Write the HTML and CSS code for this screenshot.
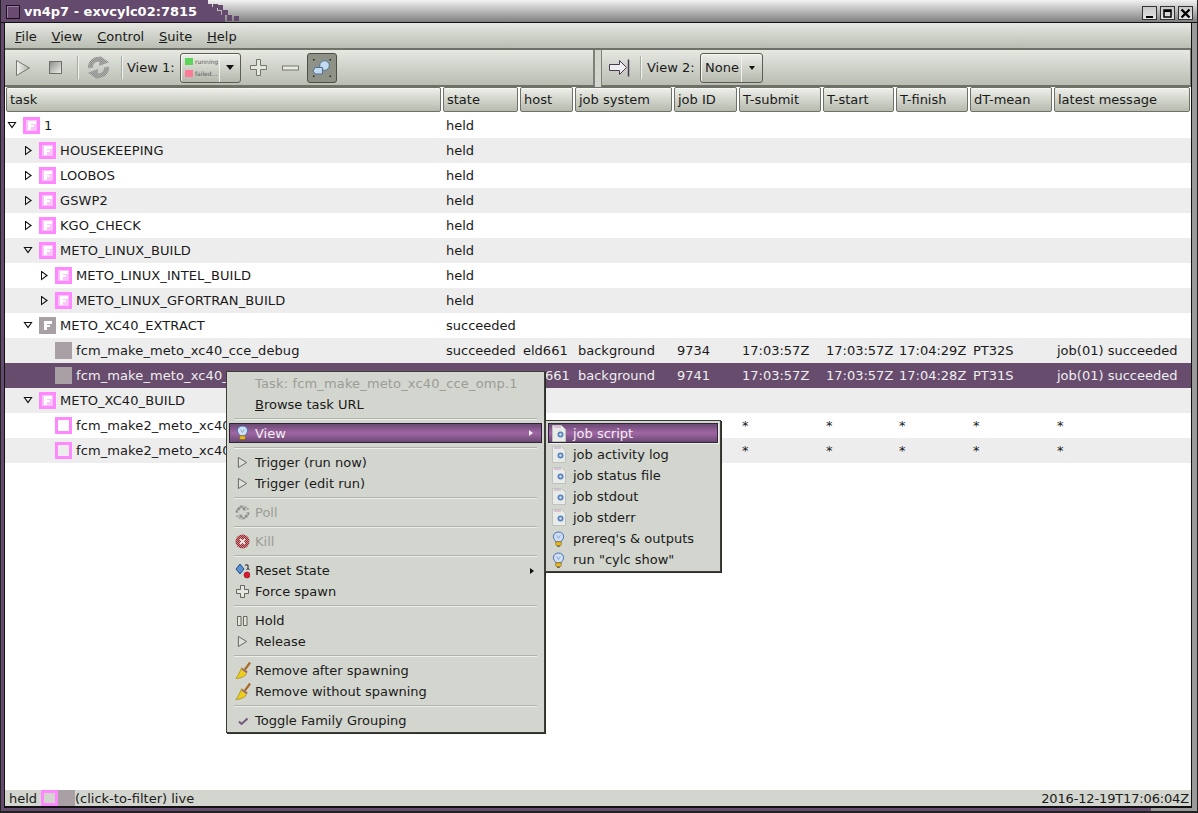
FILE: index.html
```html
<!DOCTYPE html>
<html lang="en">
<head>
<meta charset="utf-8">
<title>vn4p7 - exvcylc02:7815</title>
<link rel="stylesheet" href="styles.css">
</head>
<body>
<svg class="defs" width="0" height="0" aria-hidden="true">
  <defs>
    <pattern id="dots" width="2" height="2" patternUnits="userSpaceOnUse"><rect width="2" height="2" fill="#e6e8e2"/><rect width="1" height="1" fill="#555"/><rect x="1" y="1" width="1" height="1" fill="#555"/></pattern>
    <pattern id="reddots" width="2" height="2" patternUnits="userSpaceOnUse"><rect width="2" height="2" fill="#d08080"/><rect width="1" height="1" fill="#8a0a18"/><rect x="1" y="1" width="1" height="1" fill="#8a0a18"/></pattern>
    <linearGradient id="playg" x1="0" x2="1" y1="0" y2="0"><stop offset="0" stop-color="#f4f5f1"/><stop offset="1" stop-color="#aeb1a8"/></linearGradient>
    <linearGradient id="stopg" x1="0" x2="1" y1="0" y2="1"><stop offset="0" stop-color="#8c8e88"/><stop offset="1" stop-color="#f0f1ee"/></linearGradient>
    <symbol id="fam" viewBox="0 0 17 17"><rect x="5" y="4" width="8" height="3" fill="#fff"/><rect x="5" y="4" width="3" height="9" fill="#fff"/><rect x="5" y="8" width="6" height="2" fill="#fff"/></symbol>
    <symbol id="bulb" viewBox="0 0 14 17"><path d="M7 1C3.500 1 1.500 3.300 1.500 6c0 2.300 2 3.500 2.500 5.500h6C10.500 9.500 12.500 8.300 12.500 6 12.500 3.300 10.500 1 7 1z" fill="#cfe0f5" stroke="#3f66b0"/><path d="M5 4.500 7 8l2-3.500" fill="none" stroke="#8aa6d6"/><rect x="4" y="11.500" width="6" height="4" rx="1" fill="#e8b923" stroke="#8a6a10" stroke-width=".7"/><path d="M5.500 16.500h3" stroke="#555"/></symbol>
    <symbol id="tri" viewBox="0 0 12 14"><path d="M1.500 1.500v11l9-5.500z" fill="#dfe1db" stroke="#5c5e58"/></symbol>
    <symbol id="refresh" viewBox="0 0 24 24"><path d="M3.500 12.500A8.500 8.500 0 0 1 15 4" fill="none" stroke="url(#dots)" stroke-width="5"/><path d="M13.500 0 23 6.500 12.500 10.500z" fill="url(#dots)"/><path d="M20.500 11.500A8.500 8.500 0 0 1 9 20" fill="none" stroke="url(#dots)" stroke-width="5"/><path d="M10.500 24 1 17.500 11.500 13.500z" fill="url(#dots)"/></symbol>
    <symbol id="doc" viewBox="0 0 14 17"><path d="M.5.500h9l4 4v12H.500z" fill="#e9ebe8" stroke="#bfc1bd"/><path d="M2 2h7" stroke="#c69ac6"/><circle cx="8.500" cy="9.500" r="3" fill="#5b83bd"/><circle cx="8.500" cy="9.500" r="1.200" fill="#d8e4f2"/></symbol>
    <symbol id="broom" viewBox="0 0 17 18"><path d="M16 .500 10.500 8" stroke="#a86a20" stroke-width="2.400"/><path d="M7 6 13 10 11 14c-2 2-6 3.500-10 3.500C3 15 5 11 7 6z" fill="#eccd1e" stroke="#9a8210" stroke-width=".7"/><path d="M7.300 7.500 12.500 11" stroke="#8a4fa0" stroke-width="1.300"/></symbol>
  </defs>
</svg>

<div class="window">
  <header class="titlebar">
    <div class="title-tab">
      <span class="title-icon"></span>
      <span class="title-text">vn4p7 - exvcylc02:7815</span>
    </div>
    <svg class="title-dither" width="40" height="22" viewBox="0 0 40 22" aria-hidden="true">
      <path d="M0 0h3v4h4v3h5v4h4v4h4v7H0z" fill="#644a6c"/>
      <path d="M8 4h5v4H8zM13 5h5v5h-5zM17 10h6v5h-6zM22 15h5v6h-5zM29 16h5v5h-5z" fill="#644a6c"/>
    </svg>
    <div class="win-buttons">
      <span class="win-btn"><svg width="11" height="11" viewBox="0 0 11 11"><rect x="2" y="8" width="7" height="2" fill="#000"/></svg></span>
      <span class="win-btn"><svg width="11" height="11" viewBox="0 0 11 11"><path d="M2 2h7v7H2z" fill="none" stroke="#000" stroke-width="1.500"/><path d="M2 3h7" stroke="#000" stroke-width="2"/></svg></span>
      <span class="win-btn"><svg width="11" height="11" viewBox="0 0 11 11"><path d="M1.500 1.500l8 8M9.500 1.500l-8 8" stroke="#000" stroke-width="2.400"/></svg></span>
    </div>
  </header>

  <div class="client">
    <nav class="menubar">
      <span><u>F</u>ile</span>
      <span><u>V</u>iew</span>
      <span><u>C</u>ontrol</span>
      <span><u>S</u>uite</span>
      <span><u>H</u>elp</span>
    </nav>

    <div class="toolbars">
      <div class="toolbar toolbar-left">
        <span class="tool tool-play"><svg width="16" height="18" viewBox="0 0 16 18"><path d="M1.500 1.500v15l13-7.500z" fill="url(#playg)" stroke="#77796f"/></svg></span>
        <span class="tool tool-stop"><svg width="13" height="13" viewBox="0 0 13 13"><rect x=".5" y=".5" width="12" height="12" fill="url(#stopg)" stroke="#6e7068"/></svg></span>
        <span class="tool-sep sep-a"></span>
        <span class="tool tool-refresh"><svg width="23" height="23"><use href="#refresh"/></svg></span>
        <span class="tool-sep sep-b"></span>
        <span class="tool-label">View 1:</span>
        <span class="combo combo-1">
          <span class="combo-legend">
            <span class="legend-row"><i class="swatch swatch-run"></i>running</span>
            <span class="legend-row"><i class="swatch swatch-fail"></i>failed...</span>
          </span>
          <span class="combo-arrow"></span>
        </span>
        <span class="tool tool-plus"><svg width="17" height="17" viewBox="0 0 17 17"><path d="M6.500.500h4v6h6v4h-6v6h-4v-6h-6v-4h6z" fill="#e4e6e0" stroke="#74766d"/></svg></span>
        <span class="tool tool-minus"><svg width="17" height="6" viewBox="0 0 17 6"><rect x=".5" y="1" width="16" height="4" fill="#e8eae4" stroke="#74766d"/></svg></span>
        <span class="tool-active"><svg width="24" height="24" viewBox="0 0 24 24"><circle cx="14.500" cy="9.500" r="4.800" fill="#c4daf0" stroke="#50708f"/><path d="M5 11.500h7.500v6.500H5l-2-3z" fill="#c4daf0" stroke="#50708f"/><g fill="#222"><rect x="3" y="3" width="1.500" height="1.500"/><rect x="19.500" y="3" width="1.500" height="1.500"/><rect x="3" y="19.500" width="1.500" height="1.500"/><rect x="19.500" y="19.500" width="1.500" height="1.500"/></g></svg></span>
      </div>
      <div class="toolbar toolbar-right">
        <span class="tool tool-arrow"><svg width="22" height="18" viewBox="0 0 22 18"><path d="M1.500 5.500h10v-4l7 7-7 7v-4h-10z" fill="#f0eef0" stroke="#4a3a50"/><path d="M20.500.500v17" stroke="#4a3a50" stroke-width="1.500"/></svg></span>
        <span class="tool-sep sep-c"></span>
        <span class="tool-label">View 2:</span>
        <span class="combo combo-2">
          <span class="combo-value">None</span>
          <span class="combo-arrow combo-arrow-small"></span>
        </span>
      </div>
    </div>

    <div class="cols head">
      <div class="hcell hcell-first">task</div>
      <div class="hcell">state</div>
      <div class="hcell">host</div>
      <div class="hcell">job system</div>
      <div class="hcell">job ID</div>
      <div class="hcell">T-submit</div>
      <div class="hcell">T-start</div>
      <div class="hcell">T-finish</div>
      <div class="hcell">dT-mean</div>
      <div class="hcell">latest message</div>
    </div>

    <main class="tree">
      <div class="cols row">
        <div class="task d0"><span class="exp open"></span><span class="ic ic-held"><svg width="17" height="17"><use href="#fam"/></svg></span><span>1</span></div><div class="cell">held</div>
      </div>
      <div class="cols row alt">
        <div class="task d1"><span class="exp closed"></span><span class="ic ic-held"><svg width="17" height="17"><use href="#fam"/></svg></span><span>HOUSEKEEPING</span></div><div class="cell">held</div>
      </div>
      <div class="cols row">
        <div class="task d1"><span class="exp closed"></span><span class="ic ic-held"><svg width="17" height="17"><use href="#fam"/></svg></span><span>LOOBOS</span></div><div class="cell">held</div>
      </div>
      <div class="cols row alt">
        <div class="task d1"><span class="exp closed"></span><span class="ic ic-held"><svg width="17" height="17"><use href="#fam"/></svg></span><span>GSWP2</span></div><div class="cell">held</div>
      </div>
      <div class="cols row">
        <div class="task d1"><span class="exp closed"></span><span class="ic ic-held"><svg width="17" height="17"><use href="#fam"/></svg></span><span>KGO_CHECK</span></div><div class="cell">held</div>
      </div>
      <div class="cols row alt">
        <div class="task d1"><span class="exp open"></span><span class="ic ic-held"><svg width="17" height="17"><use href="#fam"/></svg></span><span>METO_LINUX_BUILD</span></div><div class="cell">held</div>
      </div>
      <div class="cols row">
        <div class="task d2"><span class="exp closed"></span><span class="ic ic-held"><svg width="17" height="17"><use href="#fam"/></svg></span><span>METO_LINUX_INTEL_BUILD</span></div><div class="cell">held</div>
      </div>
      <div class="cols row alt">
        <div class="task d2"><span class="exp closed"></span><span class="ic ic-held"><svg width="17" height="17"><use href="#fam"/></svg></span><span>METO_LINUX_GFORTRAN_BUILD</span></div><div class="cell">held</div>
      </div>
      <div class="cols row">
        <div class="task d1"><span class="exp open"></span><span class="ic ic-done"><svg width="17" height="17"><use href="#fam"/></svg></span><span>METO_XC40_EXTRACT</span></div><div class="cell">succeeded</div>
      </div>
      <div class="cols row alt">
        <div class="task d2"><span class="exp"></span><span class="ic ic-done"></span><span>fcm_make_meto_xc40_cce_debug</span></div>
        <div class="cell">succeeded</div><div class="cell">eld661</div><div class="cell">background</div><div class="cell">9734</div><div class="cell">17:03:57Z</div><div class="cell">17:03:57Z</div><div class="cell">17:04:29Z</div><div class="cell">PT32S</div><div class="cell">job(01) succeeded</div>
      </div>
      <div class="cols row selected">
        <div class="task d2"><span class="exp"></span><span class="ic ic-done"></span><span>fcm_make_meto_xc40_</span></div>
        <div class="cell"></div><div class="cell host-clip"><span>661</span></div><div class="cell">background</div><div class="cell">9741</div><div class="cell">17:03:57Z</div><div class="cell">17:03:57Z</div><div class="cell">17:04:28Z</div><div class="cell">PT31S</div><div class="cell">job(01) succeeded</div>
      </div>
      <div class="cols row alt">
        <div class="task d1"><span class="exp open"></span><span class="ic ic-held"><svg width="17" height="17"><use href="#fam"/></svg></span><span>METO_XC40_BUILD</span></div><div class="cell">held</div>
      </div>
      <div class="cols row">
        <div class="task d2"><span class="exp"></span><span class="ic ic-plain"></span><span>fcm_make2_meto_xc40</span></div>
        <div class="cell"></div><div class="cell"></div><div class="cell"></div><div class="cell"></div><div class="cell">*</div><div class="cell">*</div><div class="cell">*</div><div class="cell">*</div><div class="cell">*</div>
      </div>
      <div class="cols row alt">
        <div class="task d2"><span class="exp"></span><span class="ic ic-plain"></span><span>fcm_make2_meto_xc40</span></div>
        <div class="cell"></div><div class="cell"></div><div class="cell"></div><div class="cell"></div><div class="cell">*</div><div class="cell">*</div><div class="cell">*</div><div class="cell">*</div><div class="cell">*</div>
      </div>
    </main>

    <footer class="status">
      <span class="status-held">held</span>
      <span class="status-ic status-ic-held"></span>
      <span class="status-ic status-ic-done"></span>
      <span class="status-text">(click-to-filter) live</span>
      <span class="status-time">2016-12-19T17:06:04Z</span>
    </footer>
  </div>
</div>

<div class="menu context-menu">
  <div class="mi disabled mi-title"><span class="mi-ic"></span>Task: fcm_make_meto_xc40_cce_omp.1</div>
  <div class="mi"><span class="mi-ic"></span><span><u>B</u>rowse task URL</span></div>
  <div class="ms"></div>
  <div class="mi hi"><span class="mi-ic"><svg width="13" height="16"><use href="#bulb"/></svg></span>View<span class="sub-arrow"></span></div>
  <div class="ms"></div>
  <div class="mi"><span class="mi-ic"><svg width="11" height="13"><use href="#tri"/></svg></span>Trigger (run now)</div>
  <div class="mi"><span class="mi-ic"><svg width="11" height="13"><use href="#tri"/></svg></span>Trigger (edit run)</div>
  <div class="ms"></div>
  <div class="mi disabled"><span class="mi-ic"><svg width="15" height="15"><use href="#refresh"/></svg></span>Poll</div>
  <div class="ms"></div>
  <div class="mi disabled"><span class="mi-ic"><svg width="15" height="15" viewBox="0 0 15 15"><circle cx="7.500" cy="7.500" r="7" fill="url(#reddots)"/><path d="M5 5l5 5M10 5l-5 5" stroke="#f0e8e8" stroke-width="1.800"/></svg></span>Kill</div>
  <div class="ms"></div>
  <div class="mi"><span class="mi-ic"><svg width="15" height="16" viewBox="0 0 15 16"><path d="M5 1 9 6 5 11 1 6z" fill="#5b8fd0" stroke="#23508c"/><path d="M10 2h3v4M11.500 7l1.500-1.500L14.500 7" fill="none" stroke="#222"/><circle cx="12" cy="12" r="3" fill="#e01830" stroke="#801020" stroke-width=".6"/></svg></span>Reset State<span class="sub-arrow sub-arrow-dark"></span></div>
  <div class="mi"><span class="mi-ic"><svg width="13" height="13" viewBox="0 0 13 13"><path d="M4.500.500h4v4h4v4h-4v4h-4v-4h-4v-4h4z" fill="#e4e6e0" stroke="#66685f"/></svg></span>Force spawn</div>
  <div class="ms"></div>
  <div class="mi"><span class="mi-ic"><svg width="11" height="10" viewBox="0 0 11 10"><path d="M.5.500h3.500v9H.500zM6.500.500H10v9H6.500z" fill="#e4e6e0" stroke="#66685f"/></svg></span>Hold</div>
  <div class="mi"><span class="mi-ic"><svg width="11" height="13"><use href="#tri"/></svg></span>Release</div>
  <div class="ms"></div>
  <div class="mi"><span class="mi-ic"><svg width="16" height="17"><use href="#broom"/></svg></span>Remove after spawning</div>
  <div class="mi"><span class="mi-ic"><svg width="16" height="17"><use href="#broom"/></svg></span>Remove without spawning</div>
  <div class="ms"></div>
  <div class="mi"><span class="mi-ic"><svg width="10" height="8" viewBox="0 0 10 8"><path d="M1 4.500 3.500 7 9.500 1.500" fill="none" stroke="#765a80" stroke-width="2"/></svg></span>Toggle Family Grouping</div>
</div>

<div class="menu sub-menu">
  <div class="mi hi hi-sub"><span class="mi-ic"><svg width="14" height="17"><use href="#doc"/></svg></span>job script</div>
  <div class="mi"><span class="mi-ic"><svg width="14" height="17"><use href="#doc"/></svg></span>job activity log</div>
  <div class="mi"><span class="mi-ic"><svg width="14" height="17"><use href="#doc"/></svg></span>job status file</div>
  <div class="mi"><span class="mi-ic"><svg width="14" height="17"><use href="#doc"/></svg></span>job stdout</div>
  <div class="mi"><span class="mi-ic"><svg width="14" height="17"><use href="#doc"/></svg></span>job stderr</div>
  <div class="mi"><span class="mi-ic"><svg width="13" height="16"><use href="#bulb"/></svg></span>prereq's &amp; outputs</div>
  <div class="mi"><span class="mi-ic"><svg width="13" height="16"><use href="#bulb"/></svg></span>run "cylc show"</div>
</div>
</body>
</html>
```

FILE: styles.css
```css
* { box-sizing: border-box; }
html, body { margin: 0; padding: 0; }
body {
  width: 1198px;
  height: 813px;
  overflow: hidden;
  position: relative;
  background: #fff;
  font-family: "DejaVu Sans", sans-serif;
  font-size: 13px;
  color: #1a1a1a;
}
.defs { position: absolute; }
.window {
  width: 1198px;
  height: 813px;
  display: flex;
  flex-direction: column;
  background: linear-gradient(90deg, #644a6c 0, #644a6c 1150px, #9a9a9a 1150px);
  border: solid #222;
  border-width: 0 1px 2px 1px;
}

/* title bar */
.titlebar {
  height: 23px;
  flex: none;
  display: flex;
  background: linear-gradient(#f2f2f2, #c4c4c4 40%, #7f7f7f);
  border-bottom: 1px solid #111;
}
.title-tab {
  width: 204px;
  flex: none;
  display: flex;
  align-items: center;
  background: #644a6c;
  padding: 1px 0 0 5px;
}
.title-icon {
  width: 14px;
  height: 14px;
  flex: none;
  background: #6a4c72;
  border: 1px solid #1a1020;
  box-shadow: inset 1px 1px 0 #9a80a0;
}
.title-text {
  margin-left: 4px;
  color: #fff;
  font-weight: bold;
  font-size: 13px;
  white-space: nowrap;
}
.title-dither { flex: none; }
.win-buttons {
  margin-left: auto;
  display: flex;
  gap: 3px;
  padding: 6px 4px 0 0;
}
.win-btn {
  width: 15px;
  height: 14px;
  background: linear-gradient(#c8c8c8, #e4e4e4);
  border: 1px solid #333;
  display: flex;
  align-items: center;
  justify-content: center;
}

/* client */
.client {
  flex: 1;
  margin: 0 5px 3px 3px;
  border: solid #111;
  border-width: 0 1px 2px 1px;
  background: #fff;
  display: flex;
  flex-direction: column;
  min-height: 0;
}
.menubar {
  height: 27px;
  flex: none;
  display: flex;
  align-items: center;
  gap: 14.8px;
  padding: 2px 0 0 10px;
  background: linear-gradient(#e6e8e2, #b9bdb2);
  border-bottom: 2px solid #6e7168;
  font-size: 13px;
}
.toolbars {
  height: 37px;
  flex: none;
  display: flex;
  gap: 6px;
  background: #d3d6cf;
}
.toolbar {
  display: flex;
  align-items: center;
  height: 100%;
  background: linear-gradient(#e6e8e2, #b9bdb2);
  border-bottom: 2px solid #6e7168;
}
.toolbar-left { width: 590px; border-right: 2px solid #7e8178; }
.toolbar-right { flex: 1; border-left: 1px solid #7e8178; border-right: 1px solid #7e8178; }
.tool {
  display: flex;
  align-items: center;
  justify-content: center;
  flex: none;
}
.tool svg { display: block; }
.tool-play { margin-left: 9px; width: 18px; }
.tool-stop { margin-left: 16px; width: 15px; }
.tool-sep { width: 1px; height: 23px; background: #f2f3ef; box-shadow: -1px 0 0 #a8aba2; flex: none; }
.sep-a { margin-left: 15px; }
.tool-refresh { margin-left: 8px; width: 23px; }
.sep-b { margin-left: 12px; }
.tool-label { margin-left: 4px; white-space: nowrap; width: 53px; }
.toolbar-right .tool-label { margin-left: 5px; }
.combo {
  display: flex;
  align-items: stretch;
  height: 30px;
  flex: none;
  border: 1px solid #5c5e56;
  border-radius: 3px;
  background: linear-gradient(#eceee8, #b4b8ac);
  box-shadow: inset 1px 1px 0 #f6f7f4;
}
.combo-1 { width: 61px; }
.combo-2 { width: 63px; }
.combo-legend {
  width: 39px;
  flex: none;
  display: flex;
  flex-direction: column;
  justify-content: center;
  gap: 3px;
  padding-left: 4px;
  border-right: 1px solid #f0f1ed;
  font-size: 6px;
  line-height: 9px;
  color: #5a5a5a;
}
.legend-row { display: flex; align-items: center; gap: 2px; white-space: nowrap; }
.swatch { width: 8px; height: 7px; flex: none; }
.swatch-run { background: #5fd45a; }
.swatch-fail { background: #ff7a96; }
.combo-value {
  width: 41px;
  padding-left: 4px;
  line-height: 28px;
  border-right: 1px solid #f0f1ed;
}
.combo-arrow { flex: 1; position: relative; }
.combo-arrow::after {
  content: "";
  position: absolute;
  left: 50%;
  top: 50%;
  margin: -3px 0 0 -4px;
  border: solid transparent;
  border-width: 5px 4px 0;
  border-top-color: #111;
}
.combo-arrow-small::after { margin: -2px 0 0 -3px; border-width: 4px 3px 0; }
.tool-plus { margin-left: 9px; width: 17px; }
.tool-minus { margin-left: 15px; width: 17px; }
.tool-active {
  margin-left: 8px;
  width: 30px;
  height: 30px;
  flex: none;
  display: flex;
  align-items: center;
  justify-content: center;
  background: #8f9387;
  border: 1px solid #4d4f47;
  border-radius: 3px;
}
.tool-arrow { margin-left: 6px; width: 22px; }
.sep-c { margin-left: 11px; }

/* columns */
.cols {
  display: grid;
  grid-template-columns: 438px 77px 55px 99px 65px 84px 73px 74px 84px 138px;
  flex: none;
}
.head { height: 26px; background: #fff; }
.hcell {
  margin: 0 2px 0 0;
  padding: 0 0 0 3px;
  line-height: 23px;
  border: 1px solid #6e7168;
  border-radius: 2px;
  background: linear-gradient(#eef0ea, #b6baae);
  box-shadow: inset 0 1px 0 #f7f8f5;
  white-space: nowrap;
  overflow: hidden;
  height: 25px;
}
.hcell-first { margin-left: 1px; padding-left: 3px; }

/* tree */
.tree { flex: 1; background: #fff; min-height: 0; }
.row { height: 25px; align-items: center; background: #fff; }
.row.alt { background: #ededed; }
.row.selected { background: #674c6e; color: #efefef; }
.task { display: flex; align-items: center; height: 25px; white-space: nowrap; overflow: hidden; letter-spacing: .1px; }
.d0 { padding-left: 2px; }
.d1 { padding-left: 18px; }
.d2 { padding-left: 34px; }
.cell { padding-left: 3px; white-space: nowrap; overflow: hidden; }
.host-clip { padding-left: 25px; }
.exp { width: 16px; height: 10px; flex: none; position: relative; }
.exp.open::before {
  content: "";
  position: absolute;
  left: 0;
  top: 1px;
  width: 10px;
  height: 7px;
  background: #111;
  clip-path: polygon(0 0, 100% 0, 50% 100%);
}
.exp.open::after {
  content: "";
  position: absolute;
  left: 2px;
  top: 2px;
  width: 6px;
  height: 4px;
  background: #fff;
  clip-path: polygon(0 0, 100% 0, 50% 100%);
}
.alt .exp.open::after { background: #ededed; }
.exp.closed::before {
  content: "";
  position: absolute;
  left: 2px;
  top: 0;
  width: 7px;
  height: 10px;
  background: #111;
  clip-path: polygon(0 0, 100% 50%, 0 100%);
}
.exp.closed::after {
  content: "";
  position: absolute;
  left: 3px;
  top: 2px;
  width: 4px;
  height: 6px;
  background: #fff;
  clip-path: polygon(0 0, 100% 50%, 0 100%);
}
.alt .exp.closed::after { background: #ededed; }
.ic { width: 17px; height: 17px; flex: none; margin-right: 4px; display: block; }
.ic svg { display: block; }
.ic-held { background: #fbc4fb; border: 3px solid #ff88ff; }
.ic-held svg { margin: -3px; }
.ic-done { background: #a8a0a4; }
.ic-plain { background: #fff; border: 3px solid #ff88ff; }
.alt .ic-plain { background: #ededed; }

/* status */
.status {
  height: 16px;
  flex: none;
  display: flex;
  align-items: center;
  background: #d3d6cf;
  padding: 0 2px 0 4px;
}
.status-held { width: 32px; }
.status-ic { width: 17px; height: 16px; flex: none; }
.status-ic-held { border: 3px solid #ff88ff; }
.status-ic-done { background: #a8a0a4; }
.status-time { margin-left: auto; letter-spacing: -.15px; }

/* menus */
.menu {
  position: absolute;
  background: #d3d6cf;
  border: 1px solid #3c3e38;
  box-shadow: 1px 1px 0 #2a2c28;
  padding: 1px 2px 2px;
}
.context-menu { left: 226px; top: 371px; width: 319px; height: 362px; }
.sub-menu { left: 545px; top: 420px; width: 176px; height: 152px; padding-top: 2px; }
.mi {
  height: 21px;
  display: flex;
  align-items: center;
  padding-left: 1px;
  white-space: nowrap;
  position: relative;
}
.mi-ic { width: 25px; height: 19px; flex: none; display: flex; align-items: center; justify-content: center; }
.mi-ic svg { display: block; }
.sub-menu .mi-ic { width: 24px; justify-content: flex-start; padding-left: 3px; }
.mi-title { letter-spacing: .15px; }
.mi.disabled { color: #9a9c96; }
.mi.disabled svg { opacity: .85; }
.mi.hi {
  color: #f2eef3;
  background: linear-gradient(#6a4a74, #a066a4 50%, #6a4a74);
  border: 1px solid #2e2433;
  height: 20px;
  margin: 0 0 1px;
  padding-left: 0;
}
.hi-sub { box-shadow: 1px 1px 0 #f2f2f2; }
.ms { height: 8px; position: relative; }
.ms::after {
  content: "";
  position: absolute;
  left: 5px;
  right: 5px;
  top: 3px;
  height: 2px;
  background: linear-gradient(#b0b3ab 50%, #eceee8 50%);
}
.sub-arrow {
  position: absolute;
  right: 8px;
  top: 50%;
  margin-top: -3px;
  border: solid transparent;
  border-width: 3px 0 3px 4px;
  border-left-color: #f2eef3;
}
.sub-arrow-dark { border-left-color: #111; }
```
